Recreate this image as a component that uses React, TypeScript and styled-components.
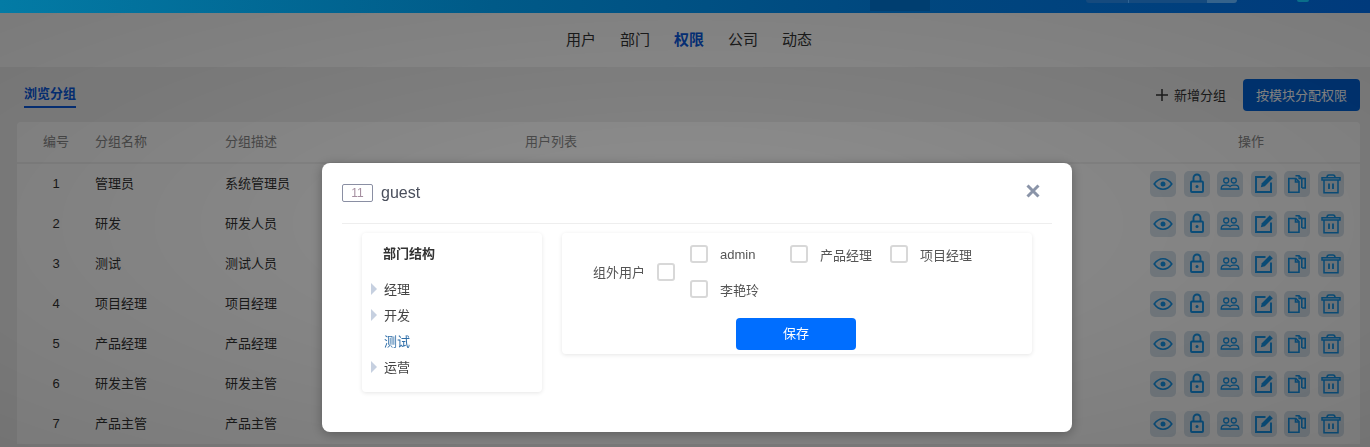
import React, { FC } from 'react';
import styled, { createGlobalStyle } from 'styled-components';

const GROUPS = [
  { id: 1, name: '管理员', desc: '系统管理员' },
  { id: 2, name: '研发', desc: '研发人员' },
  { id: 3, name: '测试', desc: '测试人员' },
  { id: 4, name: '项目经理', desc: '项目经理' },
  { id: 5, name: '产品经理', desc: '产品经理' },
  { id: 6, name: '研发主管', desc: '研发主管' },
  { id: 7, name: '产品主管', desc: '产品主管' },
];

const NAV = ['用户', '部门', '权限', '公司', '动态'];
const DEPARTMENTS = [
  { name: '经理', hasChildren: true },
  { name: '开发', hasChildren: true },
  { name: '测试', hasChildren: false, active: true },
  { name: '运营', hasChildren: true },
];

const EyeIcon = () => (
  <svg width="20" height="20" viewBox="0 0 20 20" fill="none" stroke="currentColor" strokeWidth="1.6">
    <path d="M1.2 10C3.8 6.4 6.7 4.8 10 4.8s6.2 1.6 8.8 5.2c-2.6 3.6-5.5 5.2-8.8 5.2S3.8 13.6 1.2 10z" />
    <circle cx="10" cy="10" r="2.5" fill="currentColor" stroke="none" />
  </svg>
);

const LockIcon = () => (
  <svg width="20" height="22" viewBox="0 0 20 22" fill="none" stroke="currentColor" strokeWidth="1.9">
    <rect x="4" y="8.5" width="12" height="10.5" rx="1" />
    <path d="M6.5 8.5V5a3.500 3.500 0 0 1 7 0v3.500" />
    <circle cx="10" cy="13.5" r="1.5" fill="currentColor" stroke="none" />
  </svg>
);

const UsersIcon = () => (
  <svg width="20" height="20" viewBox="0 0 20 20" fill="none" stroke="currentColor" strokeWidth="1.3">
    <circle cx="6.2" cy="6.5" r="2.5" />
    <circle cx="13.8" cy="6.5" r="2.5" />
    <path d="M1.2 15c0-2.700 1.500-3.800 3.500-3.800h2c1.500 0 2.500.5 3.300 1.500.8-1 1.800-1.500 3.300-1.500h2c2 0 3.500 1.100 3.500 3.800z" />
  </svg>
);

const EditIcon = () => (
  <svg width="20" height="20" viewBox="0 0 20 20" fill="none">
    <path d="M11.5 3H2v15h15V8.5" stroke="currentColor" strokeWidth="1.9" />
    <path d="M6.8 13.300l1-4L15.800 1.300l3 3-8 8z" fill="currentColor" />
  </svg>
);

const CopyIcon = () => (
  <svg width="20" height="20" viewBox="0 0 20 20" fill="none" stroke="currentColor" strokeWidth="1.6">
    <path d="M1.8 4.500h7l3.200 3.200v10.500H1.800z" />
    <path d="M8.500 4.500v3.500H12" />
    <path d="M8.500 1.800h3.500l2.800 2.800v9.400" />
    <path d="M12 1.800v2.800h2.800" strokeWidth="1.2" />
    <path d="M15 4.500h3.200v9.500H15" />
  </svg>
);

const TrashIcon = () => (
  <svg width="20" height="22" viewBox="0 0 20 22" fill="none" stroke="currentColor" strokeWidth="1.5">
    <path d="M1 7V4.700h18V7z" />
    <path d="M6 4.500C6 2.800 6.800 2 8 2h4c1.200 0 2 .8 2 2.500" />
    <path d="M3 7v12.700h14V7" />
    <path d="M8 10.500v5.500M12 10.500v5.500" strokeWidth="1.8" />
  </svg>
);

const ACTIONS = [EyeIcon, LockIcon, UsersIcon, EditIcon, CopyIcon, TrashIcon];

const App: FC = () => (
  <>
    <GlobalStyle />
    <TopBar>
      <DarkBlock />
      <SearchBox>
        <SearchSelect />
        <SearchInput />
        <SearchButton />
      </SearchBox>
      <Avatar />
    </TopBar>
    <NavBar>
      {NAV.map((item) => (
        <NavItem key={item} $active={item === '权限'}>
          {item}
        </NavItem>
      ))}
    </NavBar>
    <Content>
      <Toolbar>
        <Tab>浏览分组</Tab>
        <ToolbarActions>
          <AddLink>
            <PlusMark viewBox="0 0 14 14">
              <path d="M7 1v12M1 7h12" stroke="currentColor" strokeWidth="1.5" />
            </PlusMark>
            新增分组
          </AddLink>
          <PrimaryButton>按模块分配权限</PrimaryButton>
        </ToolbarActions>
      </Toolbar>
      <Card>
        <HeadRow>
          <HeadId>编号</HeadId>
          <span>分组名称</span>
          <span>分组描述</span>
          <span>用户列表</span>
          <OperationHead>操作</OperationHead>
        </HeadRow>
        {GROUPS.map((group) => (
          <Row key={group.id}>
            <IdCell>{group.id}</IdCell>
            <RowText>{group.name}</RowText>
            <RowText>{group.desc}</RowText>
            <span />
            <Operations>
              {ACTIONS.map((Icon, index) => (
                <IconTile key={index}>
                  <Icon />
                </IconTile>
              ))}
            </Operations>
          </Row>
        ))}
      </Card>
    </Content>
    <Mask />
    <Modal>
      <ModalHeader>
        <IdTag>11</IdTag>
        <ModalTitle>guest</ModalTitle>
        <CloseMark viewBox="0 0 14 14">
          <path d="M1.5 1.5l11 11M12.5 1.5l-11 11" stroke="currentColor" strokeWidth="3" />
        </CloseMark>
      </ModalHeader>
      <ModalBody>
        <TreePanel>
          <TreeTitle>部门结构</TreeTitle>
          {DEPARTMENTS.map((dept) => (
            <TreeRow key={dept.name} $active={dept.active}>
              <Caret $visible={dept.hasChildren} />
              {dept.name}
            </TreeRow>
          ))}
        </TreePanel>
        <UsersPanel>
          <UsersForm>
            <GroupLabel>组外用户</GroupLabel>
            <CheckBox />
            <UserGrid>
              {['admin', '产品经理', '项目经理', '李艳玲'].map((user) => (
                <UserOption key={user}>
                  <CheckBox />
                  <UserName>{user}</UserName>
                </UserOption>
              ))}
            </UserGrid>
          </UsersForm>
          <SaveButton>保存</SaveButton>
        </UsersPanel>
      </ModalBody>
    </Modal>
  </>
);

const GlobalStyle = createGlobalStyle`
  html, body {
    margin: 0;
    height: 100%;
    overflow: hidden;
    background: #f0f0f0;
    font-family: "Liberation Sans", "Noto Sans CJK SC", sans-serif;
    font-size: 13px;
    color: #333;
  }
  * { box-sizing: border-box; }
`;

// sits above the mask, so these are the colours as they end up on screen
const TopBar = styled.div`
  position: relative;
  z-index: 2;
  height: 13px;
  overflow: hidden;
  display: flex;
  padding: 0 61px 0 870px;
  background: linear-gradient(90deg, #037ba5 0%, #005a88 36%, #00487f 64%, #003a7c 100%);
`;

const DarkBlock = styled.div`
  width: 60px;
  height: 11px;
  margin-right: 156px;
  background: #003e70;
`;

const SearchBox = styled.div`
  display: flex;
  width: 151px;
  height: 3px;
  border-radius: 0 0 3px 3px;
  overflow: hidden;
`;

const SearchSelect = styled.div`
  width: 43px;
  background: #154a7e;
  border-right: 1px solid #2f6494;
`;

const SearchInput = styled.div`
  flex: 1;
  background: #154a7e;
`;

const SearchButton = styled.div`
  width: 30px;
  background: #35638c;
`;

const Avatar = styled.div`
  width: 12px;
  height: 2px;
  margin-left: 60px;
  background: #0a6e8a;
  border-radius: 0 0 6px 6px;
`;

const NavBar = styled.nav`
  height: 54px;
  display: flex;
  align-items: center;
  justify-content: center;
  gap: 24px;
  padding: 0 0 4px 8px;
  background: #fff;
`;

const NavItem = styled.a<{ $active?: boolean }>`
  font-size: 15px;
  color: ${(p) => (p.$active ? '#0a5ae0' : '#333')};
  font-weight: ${(p) => (p.$active ? 700 : 400)};
`;

const Content = styled.main`
  padding: 0 10px 0 17px;
`;

const Toolbar = styled.div`
  height: 55px;
  display: flex;
  align-items: flex-start;
  justify-content: space-between;
  padding: 12px 0 0 7px;
`;

const Tab = styled.div`
  height: 29px;
  padding-top: 1px;
  line-height: 28px;
  font-weight: 700;
  color: #0a5ae0;
  border-bottom: 2px solid #0a5ae0;
`;

const ToolbarActions = styled.div`
  display: flex;
  align-items: center;
  gap: 17px;
`;

const AddLink = styled.a`
  display: flex;
  align-items: center;
  gap: 5px;
  padding-bottom: 1px;
  color: #333;
`;

const PlusMark = styled.svg`
  width: 14px;
  height: 14px;
`;

const PrimaryButton = styled.button`
  width: 117px;
  height: 32px;
  border: none;
  border-radius: 4px;
  padding: 0 0 2px;
  background: #0062d8;
  color: #fff;
  font: inherit;
`;

const Card = styled.section`
  background: #fff;
  border-radius: 4px 4px 0 0;
`;

const HeadRow = styled.div`
  display: grid;
  grid-template-columns: 78px 130px 300px 1fr 210px;
  align-items: center;
  height: 42px;
  padding-bottom: 4px;
  border-bottom: 2px solid #f2f2f2;
  color: #888;
`;

const HeadId = styled.span`
  text-align: center;
`;

const Row = styled.div`
  display: grid;
  grid-template-columns: 78px 130px 300px 1fr 210px;
  align-items: center;
  height: 40px;
`;

const RowText = styled.span`
  margin-bottom: 4px;
`;

const IdCell = styled.span`
  margin-bottom: 2px;
  text-align: center;
`;

const OperationHead = styled.span`
  text-align: center;
  padding-right: 8px;
`;

const Operations = styled.div`
  display: flex;
  gap: 7.6px;
`;

const IconTile = styled.span`
  width: 26px;
  height: 26px;
  display: flex;
  align-items: center;
  justify-content: center;
  border-radius: 5px;
  background: #d6e2ec;
  color: #1593e6;
`;

const Mask = styled.div`
  position: fixed;
  z-index: 1;
  inset: 0;
  background: radial-gradient(ellipse at center, rgba(0, 0, 0, 0.44) 0%, rgba(0, 0, 0, 0.52) 100%);
`;

const Modal = styled.div`
  position: fixed;
  z-index: 3;
  left: 322px;
  top: 163px;
  width: 750px;
  height: 269px;
  padding: 0 20px;
  border-radius: 8px;
  background: #fff;
  box-shadow: 0 2px 12px rgba(0, 0, 0, 0.3);
`;

const ModalHeader = styled.header`
  height: 61px;
  display: flex;
  align-items: center;
  border-bottom: 1px solid #eee;
`;

const IdTag = styled.span`
  width: 31px;
  height: 18px;
  display: flex;
  align-items: center;
  justify-content: center;
  border: 1px solid #8a8fa3;
  border-radius: 2px;
  color: #a58fa0;
  font-size: 12px;
`;

const ModalTitle = styled.h2`
  margin: 0 0 0 8px;
  flex: 1;
  font-size: 16px;
  font-weight: 400;
  color: #4a4f5c;
`;

const CloseMark = styled.svg`
  width: 14px;
  height: 14px;
  margin: 0 12px 5px 0;
  color: #8a94a8;
`;

const ModalBody = styled.div`
  display: flex;
  align-items: flex-start;
  gap: 20px;
  padding: 9px 20px 0;
`;

const TreePanel = styled.aside`
  width: 180px;
  height: 159px;
  padding: 12px 0 0 9px;
  border-radius: 4px;
  box-shadow: 0 1px 4px rgba(0, 0, 0, 0.1);
`;

const TreeTitle = styled.div`
  height: 30px;
  margin: 0 0 0 12px;
  font-weight: 700;
  line-height: 18px;
`;

const TreeRow = styled.div<{ $active?: boolean }>`
  height: 26px;
  display: flex;
  align-items: center;
  gap: 7px;
  color: ${(p) => (p.$active ? '#2f6ea8' : '#444')};
`;

const Caret = styled.i<{ $visible?: boolean }>`
  width: 0;
  height: 0;
  margin-top: 1px;
  border-style: solid;
  border-width: 6px 0 6px 6px;
  border-color: transparent transparent transparent ${(p) => (p.$visible ? '#c6d0e0' : 'transparent')};
`;

const UsersPanel = styled.section`
  width: 470px;
  height: 121px;
  padding-top: 12px;
  box-shadow: 0 1px 4px rgba(0, 0, 0, 0.1);
  border-radius: 4px;
`;

const UsersForm = styled.div`
  height: 53px;
  display: flex;
  align-items: center;
  padding-left: 31px;
`;

const GroupLabel = styled.span`
  width: 64px;
  color: #555;
`;

const CheckBox = styled.span`
  flex: none;
  width: 18px;
  height: 18px;
  border: 2px solid #d8d8d8;
  border-radius: 3px;
  background: #fff;
`;

const UserGrid = styled.div`
  width: 300px;
  margin-left: 15px;
  display: flex;
  flex-wrap: wrap;
  row-gap: 17px;
`;

const UserOption = styled.label`
  width: 100px;
  height: 18px;
  display: flex;
  align-items: center;
  gap: 12px;
`;

const UserName = styled.span`
  color: #555;
`;

const SaveButton = styled.button`
  display: block;
  width: 120px;
  height: 32px;
  margin: 20px 0 0 174px;
  padding: 0 0 3px;
  border: none;
  border-radius: 4px;
  background: #006eff;
  color: #fff;
  font: inherit;
`;

export default App;
